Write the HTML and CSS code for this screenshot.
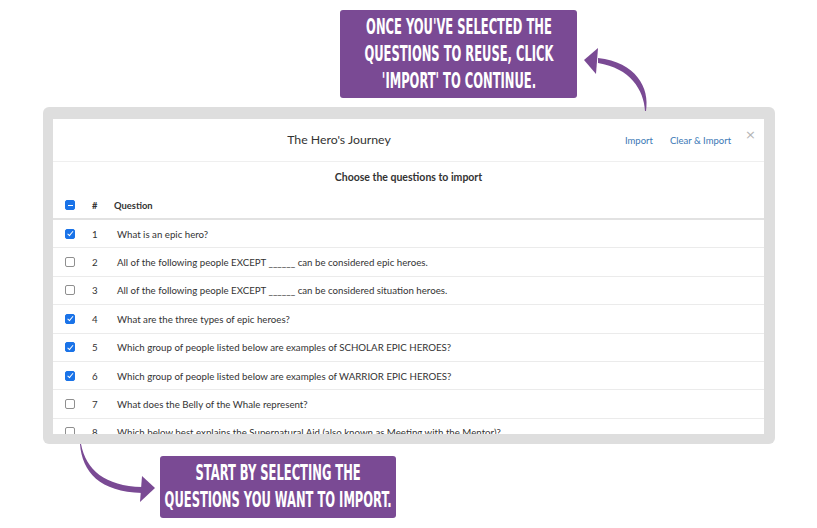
FILE: index.html
```html
<!DOCTYPE html>
<html>
<head>
<meta charset="utf-8">
<link rel="stylesheet" href="styles.css">
</head>
<body>
<div class="page">
  <div class="callout callout-top">
    <span class="callout-text">ONCE YOU'VE SELECTED THE<br>QUESTIONS TO REUSE, CLICK<br>'IMPORT' TO CONTINUE.</span>
  </div>

  <div class="frame">
    <div class="modal">
      <div class="modal-header">
        <div class="modal-title">The Hero's Journey</div>
        <div class="modal-actions">
          <a class="link">Import</a>
          <a class="link">Clear &amp; Import</a>
          <span class="close">×</span>
        </div>
      </div>
      <div class="modal-body">
        <div class="subtitle">Choose the questions to import</div>
        <div class="table">
          <div class="row head">
            <span class="cell-check"><span class="cb indeterminate"></span></span>
            <span class="cell-num">#</span>
            <span class="cell-q">Question</span>
          </div>
          <div class="row">
            <span class="cell-check"><span class="cb checked"></span></span>
            <span class="cell-num">1</span>
            <span class="cell-q">What is an epic hero?</span>
          </div>
          <div class="row">
            <span class="cell-check"><span class="cb"></span></span>
            <span class="cell-num">2</span>
            <span class="cell-q">All of the following people EXCEPT ______ can be considered epic heroes.</span>
          </div>
          <div class="row">
            <span class="cell-check"><span class="cb"></span></span>
            <span class="cell-num">3</span>
            <span class="cell-q">All of the following people EXCEPT ______ can be considered situation heroes.</span>
          </div>
          <div class="row">
            <span class="cell-check"><span class="cb checked"></span></span>
            <span class="cell-num">4</span>
            <span class="cell-q">What are the three types of epic heroes?</span>
          </div>
          <div class="row">
            <span class="cell-check"><span class="cb checked"></span></span>
            <span class="cell-num">5</span>
            <span class="cell-q">Which group of people listed below are examples of SCHOLAR EPIC HEROES?</span>
          </div>
          <div class="row">
            <span class="cell-check"><span class="cb checked"></span></span>
            <span class="cell-num">6</span>
            <span class="cell-q">Which group of people listed below are examples of WARRIOR EPIC HEROES?</span>
          </div>
          <div class="row">
            <span class="cell-check"><span class="cb"></span></span>
            <span class="cell-num">7</span>
            <span class="cell-q">What does the Belly of the Whale represent?</span>
          </div>
          <div class="row">
            <span class="cell-check"><span class="cb"></span></span>
            <span class="cell-num">8</span>
            <span class="cell-q">Which below best explains the Supernatural Aid (also known as Meeting with the Mentor)?</span>
          </div>
        </div>
      </div>
    </div>
  </div>

  <div class="callout callout-bottom">
    <span class="callout-text">START BY SELECTING THE<br>QUESTIONS YOU WANT TO IMPORT.</span>
  </div>

  <svg class="arrows" width="817" height="528" viewBox="0 0 817 528">
    <path d="M645 111 C 644 90, 630 68, 598 63 L 598 58 C 636 62, 650 88, 646 111 Z" fill="#7a4a94"/>
    <path d="M584 60 L 598 48 L 596 74 Z" fill="#7a4a94"/>
    <path d="M81 444 C 86 470, 105 486, 142 487 L 142 493 C 100 492, 82 472, 80 444 Z" fill="#7a4a94"/>
    <path d="M155 488 L 142 476 L 140 502 Z" fill="#7a4a94"/>
  </svg>
</div>
</body>
</html>
```

FILE: styles.css
```css
html, body {
  margin: 0;
  padding: 0;
  background: #ffffff;
}

.page {
  position: relative;
  width: 817px;
  height: 528px;
  overflow: hidden;
  font-family: Lato, "Open Sans", sans-serif;
}

.callout {
  background: #7a4a94;
  border-radius: 3px;
  color: #ffffff;
  display: flex;
  align-items: center;
  justify-content: center;
  box-sizing: border-box;
}

.callout-text {
  font-family: "DejaVu Sans Condensed", "DejaVu Sans", sans-serif;
  font-stretch: condensed;
  font-weight: bold;
  font-size: 21px;
  line-height: 27px;
  text-align: center;
  display: inline-block;
  transform: scaleX(0.61);
  white-space: nowrap;
  flex-shrink: 0;
}

.callout-top {
  margin-left: 340px;
  margin-top: 10px;
  width: 237px;
  height: 88px;
}

.callout-bottom {
  margin-left: 160px;
  margin-top: 12px;
  width: 236px;
  height: 62px;
}

.frame {
  margin-left: 43px;
  margin-top: 9px;
  width: 732px;
  height: 337px;
  box-sizing: border-box;
  background: #dedede;
  border-radius: 6px;
  padding: 12px 11px 10px 10px;
}

.modal {
  background: #ffffff;
  height: 100%;
  overflow: hidden;
  display: flex;
  flex-direction: column;
}

.modal-header {
  display: flex;
  align-items: center;
  height: 43px;
  box-sizing: border-box;
  border-bottom: 1px solid #efefef;
  flex-shrink: 0;
}

.modal-title {
  flex: 1;
  text-align: center;
  font-size: 12.3px;
  color: #333333;
  margin-top: -2px;
}

.modal-actions {
  display: flex;
  align-items: center;
  gap: 17px;
  padding-right: 8px;
}

.link {
  font-size: 9.5px;
  color: #3b78b5;
  margin-top: 1px;
}

.close {
  font-size: 13px;
  color: #b5b5b5;
  margin-left: -3px;
  margin-top: -12px;
  font-family: "DejaVu Sans", sans-serif;
}

.modal-body {
  flex: 1;
  overflow: hidden;
}

.subtitle {
  text-align: center;
  font-weight: bold;
  font-size: 10.5px;
  color: #333333;
  padding-top: 9px;
  height: 21px;
}

.table {
  display: flex;
  flex-direction: column;
}

.row {
  display: flex;
  align-items: center;
  height: 28.4px;
  box-sizing: border-box;
  border-bottom: 1px solid #ebebeb;
  font-size: 9.7px;
  color: #333333;
  flex-shrink: 0;
}

.row.head {
  height: 28px;
  border-bottom: 2px solid #e2e2e2;
  font-weight: bold;
  font-size: 9.4px;
}

.cell-check {
  width: 35px;
  padding-left: 12px;
  box-sizing: border-box;
  display: flex;
  align-items: center;
}

.cell-num {
  width: 29px;
  padding-left: 4px;
  box-sizing: border-box;
}

.row.head .cell-num {
  width: 26px;
}

.cell-q {
  flex: 1;
  white-space: nowrap;
}

.cb {
  width: 8px;
  height: 8px;
  border: 1px solid #8f8f8f;
  border-radius: 2px;
  background: #ffffff;
  position: relative;
  box-sizing: content-box;
}

.cb.checked,
.cb.indeterminate {
  background: #1a73e8;
  border-color: #1a73e8;
}

.cb.checked::after {
  content: "";
  position: absolute;
  left: 2.5px;
  top: 0.5px;
  width: 2px;
  height: 4.5px;
  border-right: 1.5px solid #ffffff;
  border-bottom: 1.5px solid #ffffff;
  transform: rotate(40deg);
}

.cb.indeterminate::after {
  content: "";
  position: absolute;
  left: 1.5px;
  top: 3.5px;
  width: 5px;
  height: 1.5px;
  background: #ffffff;
}

.arrows {
  position: absolute;
  left: 0;
  top: 0;
  pointer-events: none;
}
```
